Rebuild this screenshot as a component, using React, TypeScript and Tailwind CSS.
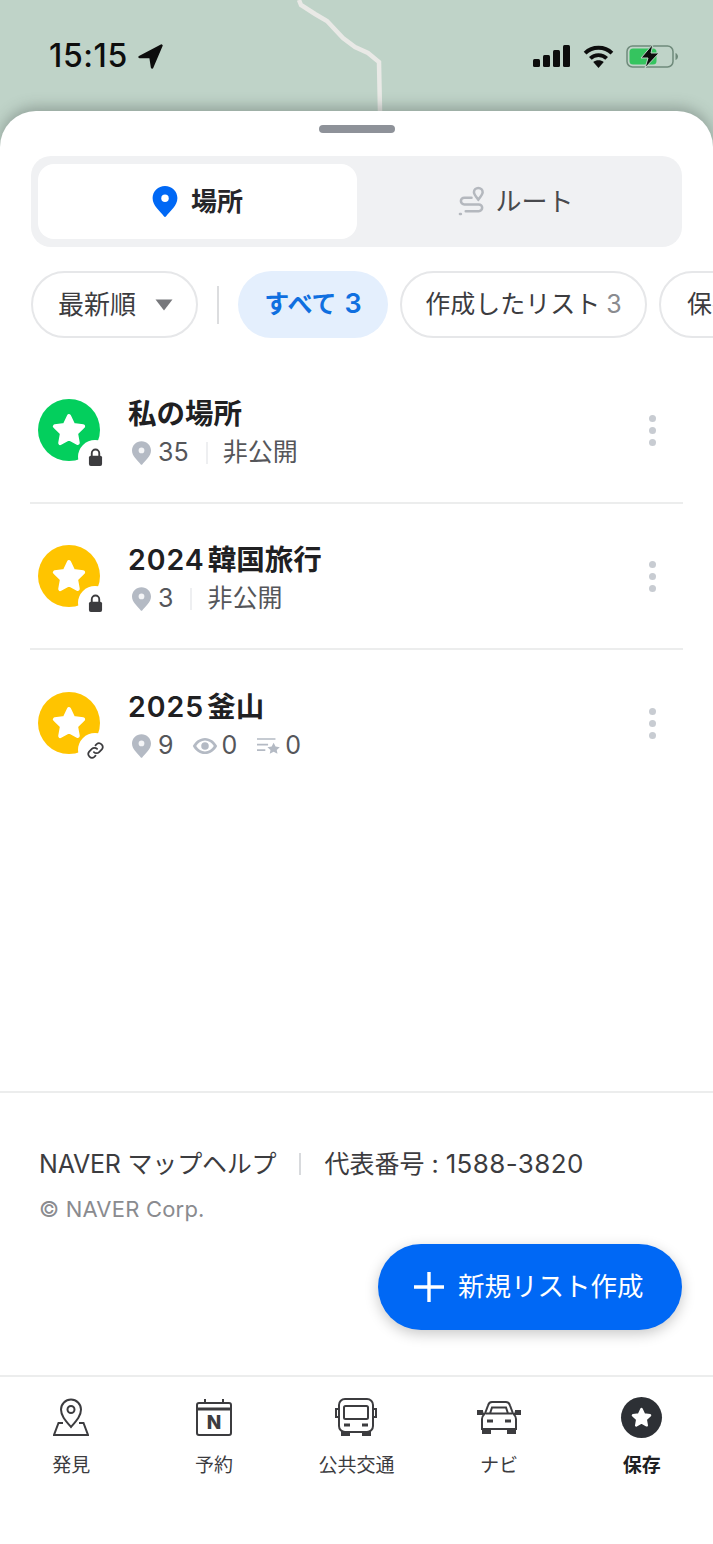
import React from 'react';

const FONT = "font-['Inter','Noto_Sans_CJK_JP',sans-serif]";

const Pin = ({ className, hole = '#fff' }: { className?: string; hole?: string }) => (
  <svg viewBox="0 0 24 30" className={className}>
    <path fill="currentColor" d="M12 0C5.4 0 0 5.2 0 11.7c0 3.6 1.6 6.7 4 9.6 2.4 2.9 5.4 5.8 7.1 8.2.4.6 1.4.6 1.8 0 1.7-2.4 4.7-5.3 7.1-8.2 2.4-2.9 4-6 4-9.6C24 5.2 18.6 0 12 0z" />
    <circle cx="12" cy="11.8" r="3.6" fill={hole} />
  </svg>
);

const Star = ({ className }: { className?: string }) => (
  <svg viewBox="0 0 24 24" className={className}>
    <path fill="currentColor" stroke="currentColor" strokeWidth="2.6" strokeLinejoin="round" d="M12 3.2l2.7 5.7 6.2.8-4.5 4.3 1.1 6.2-5.5-3-5.5 3 1.1-6.2-4.5-4.3 6.2-.8z" />
  </svg>
);

const Lock = () => (
  <svg viewBox="0 0 16 20" className="w-[15px] h-[19px]">
    <path fill="none" stroke="#3c3c3f" strokeWidth="2" d="M4 9V5.5a4 4 0 0 1 8 0V9" />
    <rect x="1" y="8" width="14" height="11" rx="2" fill="#3c3c3f" />
  </svg>
);

const LinkIcon = () => (
  <svg viewBox="0 0 24 24" className="w-[19px] h-[19px]" fill="none" stroke="#3c3c3f" strokeWidth="2.2" strokeLinecap="round">
    <path d="M10 14a4.6 4.6 0 0 0 6.6 0l3.4-3.4A4.7 4.7 0 0 0 13.4 4L12 5.4" />
    <path d="M14 10a4.6 4.6 0 0 0-6.6 0L4 13.4A4.7 4.7 0 0 0 10.6 20l1.4-1.4" />
  </svg>
);

const Eye = () => (
  <svg viewBox="0 0 28 20" className="w-[26px] h-[18px]">
    <path fill="#b4bac4" fillRule="evenodd" d="M14 1C8 1 3 5 0.5 10 3 15 8 19 14 19s11-4 13.5-9C25 5 20 1 14 1zm0 3c4 0 7.600 2.500 9.800 6-2.200 3.500-5.800 6-9.800 6s-7.600-2.500-9.800-6C6.400 6.500 10 4 14 4z" />
    <circle cx="14" cy="10" r="4.200" fill="#b4bac4" />
  </svg>
);

const ListStar = () => (
  <svg viewBox="0 0 26 18" className="w-[24px] h-[17px]">
    <path stroke="#b4bac4" strokeWidth="1.800" d="M0 2h20M0 8h12M0 14h9" />
    <path fill="#b4bac4" d="M18 6l2.100 4.200 4.600.6-3.300 3.200.8 4-4.200-2.100-4.200 2.100.8-4-3.300-3.200 4.600-.6z" />
  </svg>
);

const MoreDots = () => (
  <div className="flex flex-col gap-[5px] mr-[27px]">
    <span className="block w-[7px] h-[7px] rounded-full bg-[#c8ccd2]" />
    <span className="block w-[7px] h-[7px] rounded-full bg-[#c8ccd2]" />
    <span className="block w-[7px] h-[7px] rounded-full bg-[#c8ccd2]" />
  </div>
);

const StatusBar = () => (
  <div className="absolute left-0 right-0 top-[38px] flex items-center justify-between pl-[49px] pr-[35px] h-[36px]">
    <div className="flex items-center gap-[10px]">
      <span className="text-[32px] font-medium text-[#0d0d0d] leading-none tracking-[0.6px]">15:15</span>
      <svg viewBox="0 0 24 24" className="w-[25px] h-[25px]">
        <path fill="#0d0d0d" stroke="#0d0d0d" strokeWidth="2.400" strokeLinejoin="round" d="M22.500 1.500L1.500 12.500h10.500L13.500 22.500z" />
      </svg>
    </div>
    <div className="flex items-center">
      <svg viewBox="0 0 37 24" className="w-[37px] h-[24px] mr-[13px]">
        <rect x="0" y="15" width="7" height="8" rx="1.500" fill="#0d0d0d" />
        <rect x="10" y="11" width="7" height="12" rx="1.500" fill="#0d0d0d" />
        <rect x="20" y="6" width="7" height="17" rx="1.500" fill="#0d0d0d" />
        <rect x="30" y="1" width="7" height="22" rx="1.500" fill="#0d0d0d" />
      </svg>
      <svg viewBox="0 0 32 24" className="w-[31px] h-[23px] mr-[12px]" fill="none" stroke="#0d0d0d" strokeWidth="4">
        <path d="M2 8.500C9.500 1 22.500 1 30 8.500" />
        <path d="M7.500 14c4.500-4.500 12.500-4.500 17 0" />
        <path fill="#0d0d0d" stroke="none" d="M16 24l-5.500-6.200c3-2.600 8-2.600 11 0z" />
      </svg>
      <div className="relative w-[52px] h-[24px]">
        <svg viewBox="0 0 52 24" className="w-[52px] h-[24px]">
          <rect x="1" y="2" width="46" height="21" rx="5.500" fill="none" stroke="#6f8a7b" strokeWidth="1.500" />
          <rect x="3.500" y="4.500" width="27" height="16" rx="3.500" fill="#35c45f" />
          <path d="M49.500 9v7c1.500-.5 2.500-2 2.500-3.500S51 9.500 49.500 9z" fill="#6f8a7b" />
          <path d="M27 0L15 14h7l-3 10 14-15h-8z" fill="#0d0d0d" stroke="#bfd3c8" strokeWidth="1" />
        </svg>
      </div>
    </div>
  </div>
);

const Row = ({ color, title, badge, children, border = true }: { color: string; title: React.ReactNode; badge: React.ReactNode; children: React.ReactNode; border?: boolean }) => (
  <div className={`h-[146px] flex items-center justify-between ml-[30px] mr-[30px] ${border ? 'border-b-2 border-[#eceded]' : ''}`}>
    <div className="flex items-center pl-[8px]">
      <div className={`relative w-[62px] h-[62px] rounded-full flex items-center justify-center ${color}`}>
        <Star className="w-[38px] h-[38px] text-white" />
        <div className="absolute right-[-12px] bottom-[-13px] w-[34px] h-[34px] rounded-full bg-white flex items-center justify-center">
          {badge}
        </div>
      </div>
      <div className="ml-[28px] flex flex-col mt-[4px]">
        <div className="text-[28.5px] font-semibold text-[#202022] leading-[36px]">{title}</div>
        <div className="flex items-center h-[32px] mt-[5px] text-[25px] text-[#55565a] leading-none">{children}</div>
      </div>
    </div>
    <MoreDots />
  </div>
);

const PinSmall = () => <Pin className="w-[19px] h-[24px] text-[#b4bac4] ml-[4px] mr-[7px]" hole="#f4f5f7" />;
const VBar = () => <span className="block w-[2px] h-[22px] bg-[#eeeff1] ml-[17px] mr-[15px]" />;

const Tab = ({ label, icon, active }: { label: string; icon: React.ReactNode; active?: boolean }) => (
  <div className="flex-1 flex flex-col items-center">
    <div className="h-[44px] flex items-center justify-center">{icon}</div>
    <div className={`mt-[14px] text-[19px] leading-[26px] ${active ? 'font-semibold text-[#202022]' : 'font-normal text-[#3c3c3f]'}`}>{label}</div>
  </div>
);

const App: React.FC = () => {
  return (
    <div className={`relative w-[713px] h-[1544px] overflow-hidden bg-[#bfd3c8] ${FONT}`}>
      {/* map behind the sheet */}
      <div className="relative h-[111px]">
        <svg viewBox="0 0 713 111" className="absolute inset-0 w-[713px] h-[111px]">
          <path d="M299 0l2 5 14 9 12 7 16 17 12 9 13 6 11 9 .5 25 .5 24" fill="none" stroke="#e9e9e6" strokeWidth="4.500" />
        </svg>
        <StatusBar />
      </div>

      <div className="absolute left-0 right-0 top-[111px] bottom-0 rounded-t-[36px] bg-white shadow-[0_-4px_14px_rgba(60,70,65,0.35)] flex flex-col">
        <div className="w-[76px] h-[8px] rounded-full bg-[#8e9299] mx-auto mt-[14px] shrink-0" />

        <div className="mx-[31px] mt-[23px] h-[91px] rounded-[20px] bg-[#f0f1f3] px-[7px] py-[8px] flex shrink-0">
          <div className="w-[319px] rounded-[16px] bg-white flex items-center justify-center gap-[13px]">
            <Pin className="w-[26px] h-[31px] text-[#0068f5]" />
            <span className="text-[26px] font-semibold text-[#26262a]">場所</span>
          </div>
          <div className="flex-1 flex items-center justify-center gap-[8px]">
            <svg viewBox="0 0 30 32" className="w-[29px] h-[31px]" fill="none" stroke="#b4b8be" strokeWidth="2.600" strokeLinecap="round">
              <path d="M21 14c-3-3.500-4.500-5.500-4.500-7.500a4.500 4.500 0 0 1 9 0c0 2-1.500 4-4.500 7.500z" />
              <path d="M14 12H6.500a3.500 3.500 0 0 0 0 7h15a3.500 3.500 0 0 1 0 7H8" />
              <path d="M2 29h1" />
            </svg>
            <span className="text-[26px] text-[#48494d]">ルート</span>
          </div>
        </div>

        <div className="flex items-center ml-[31px] mt-[24px] shrink-0 w-[900px]">
          <div className="h-[67px] w-[167px] shrink-0 rounded-full border-2 border-[#e6e7e9] flex items-center pl-[25px] text-[26px] text-[#3c3c3f]">
            最新順
            <svg viewBox="0 0 18 12" className="w-[18px] h-[12px] ml-[19px]">
              <path d="M0.500 0.500h17L9 11.500z" fill="#77787c" />
            </svg>
          </div>
          <span className="block w-[2px] h-[38px] bg-[#dcdddf] ml-[19px] mr-[19px] shrink-0" />
          <div className="h-[67px] w-[150px] shrink-0 rounded-full bg-[#e4effd] text-[#0f6fe0] font-semibold flex items-center justify-center text-[25px]">
            <span>すべて</span>
            <span className="ml-[8px] text-[27px]">3</span>
          </div>
          <div className="w-[12px] shrink-0" />
          <div className="h-[67px] w-[247px] shrink-0 rounded-full border-2 border-[#e6e7e9] text-[#3c3c3f] flex items-center justify-center text-[25px]">
            <span>作成したリスト</span>
            <span className="ml-[6px] text-[#8a8b8f]">3</span>
          </div>
          <div className="w-[12px] shrink-0" />
          <div className="h-[67px] shrink-0 rounded-full border-2 border-[#e6e7e9] text-[#3c3c3f] flex items-center px-[26px] text-[25px]">保存したリスト</div>
        </div>

        <div className="mt-[20px] shrink-0">
          <Row color="bg-[#03cf5d]" title="私の場所" badge={<Lock />}>
            <PinSmall />
            <span>35</span>
            <VBar />
            <span>非公開</span>
          </Row>
          <Row color="bg-[#ffc400]" title={<span><span className="tracking-[1px]">2024</span><span className="ml-[3px]">韓国旅行</span></span>} badge={<Lock />}>
            <PinSmall />
            <span>3</span>
            <VBar />
            <span>非公開</span>
          </Row>
          <Row color="bg-[#ffc400]" title={<span><span className="tracking-[1px]">2025</span><span className="ml-[3px]">釜山</span></span>} badge={<LinkIcon />} border={false}>
            <PinSmall />
            <span>9</span>
            <span className="ml-[18px] mr-[4px] flex"><Eye /></span>
            <span>0</span>
            <span className="ml-[20px] mr-[4px] flex"><ListStar /></span>
            <span>0</span>
          </Row>
        </div>

        <div className="mt-[295px] border-t-2 border-[#eceded] h-[284px] shrink-0 relative">
          <div className="flex items-center mt-[55px] ml-[39px] text-[25px] leading-[32px] text-[#3c3c3f]">
            <span className="tracking-[-0.2px]">NAVER マップヘルプ</span>
            <span className="block w-[2px] h-[22px] bg-[#d8dadd] mx-[23px]" />
            <span>代表番号 : <span className="text-[26px] tracking-[0.4px]">1588-3820</span></span>
          </div>
          <div className="mt-[15px] ml-[39px] text-[22px] leading-[28px] tracking-[0.2px] text-[#8a8b8f]">© NAVER Corp.</div>
          <div className="absolute right-[31px] top-[151px] w-[304px] h-[86px] rounded-full bg-[#0068f5] shadow-[0_4px_14px_rgba(0,0,0,0.22)] flex items-center pl-[35px] text-white">
            <svg viewBox="0 0 32 32" className="w-[32px] h-[32px]">
              <path d="M16 1v30M1 16h30" stroke="#fff" strokeWidth="3.400" />
            </svg>
            <span className="ml-[13px] text-[26.5px] font-normal">新規リスト作成</span>
          </div>
        </div>

        <div className="border-t-2 border-[#eceded] flex-1 flex pt-[18px] px-0">
          <Tab
            label="発見"
            icon={
              <svg viewBox="0 0 36 38" className="w-[36px] h-[38px]" fill="none" stroke="#3c3c3f" strokeWidth="2">
                <path d="M18 29c-6-7-10-11.500-10-17.500a10 10 0 0 1 20 0C28 17.500 24 22 18 29z" />
                <circle cx="18" cy="11.500" r="3.500" />
                <path d="M10 25H5.500L1 37h34L30.500 25H26" />
              </svg>
            }
          />
          <Tab
            label="予約"
            icon={
              <svg viewBox="0 0 36 37" className="w-[36px] h-[37px]" fill="none" stroke="#3c3c3f" strokeWidth="2">
                <rect x="1" y="4" width="34" height="32" rx="2" />
                <path d="M1 10h34" strokeWidth="3" />
                <path d="M9 0v5M27 0v5" />
                <text x="18" y="30" textAnchor="middle" fontSize="19" fontWeight="800" fontFamily="Inter, sans-serif" fill="#3c3c3f" stroke="none">N</text>
              </svg>
            }
          />
          <Tab
            label="公共交通"
            icon={
              <svg viewBox="0 0 44 38" className="w-[44px] h-[38px]" fill="none" stroke="#3c3c3f" strokeWidth="2">
                <rect x="5" y="1" width="34" height="33" rx="6" />
                <rect x="10" y="8" width="24" height="13" rx="1.500" />
                <path d="M5 11H2v8h3M39 11h3v8h-3" />
                <path d="M10 27h6M28 27h6" strokeWidth="3" />
                <path d="M8 34h7v4H8zM29 34h7v4h-7z" fill="#3c3c3f" />
              </svg>
            }
          />
          <Tab
            label="ナビ"
            icon={
              <svg viewBox="0 0 46 33" className="w-[46px] h-[33px]" fill="none" stroke="#3c3c3f" strokeWidth="2">
                <path d="M6 28V18c0-3 2-4.500 3-5.500l3-8c.5-2 2-3.500 4-3.500h14c2 0 3.500 1.500 4 3.500l3 8c1 1 3 2.500 3 5.500v10z" />
                <path d="M10 12.500h26M14 12.500l2-6h14l2 6" />
                <path d="M8 13H2v-3h5M38 13h6v-3h-5" fill="#3c3c3f" />
                <path d="M11 20h6M29 20h6" strokeWidth="3" />
                <path d="M7 28h7v5H7zM32 28h7v5h-7z" fill="#3c3c3f" />
              </svg>
            }
          />
          <Tab
            label="保存"
            active
            icon={
              <div className="w-[41px] h-[41px] rounded-full bg-[#2d3035] flex items-center justify-center">
                <Star className="w-[23px] h-[23px] text-white" />
              </div>
            }
          />
        </div>
      </div>
    </div>
  );
};

export default App;
